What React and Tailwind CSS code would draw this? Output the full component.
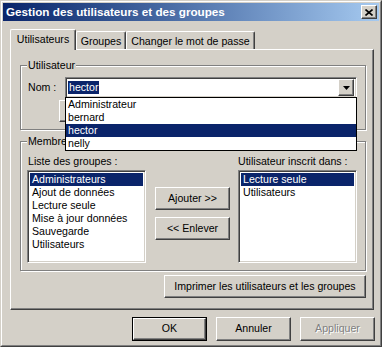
import React from "react";

const raised = "border border-t-white border-l-white border-r-[#404040] border-b-[#404040] shadow-[inset_-1px_-1px_0_#808080] bg-[#d4d0c8]";
const sunken = "border border-t-[#808080] border-l-[#808080] border-r-white border-b-white shadow-[inset_1px_1px_0_#404040,inset_-1px_-1px_0_#d4d0c8] bg-white";

const Button = ({ children, className = "", disabled, isDefault }) => {
  const label = (
    <span className={disabled ? "text-[#808080] [text-shadow:1px_1px_0_#fff]" : "text-black"}>{children}</span>
  );
  if (isDefault) {
    return (
      <div className={`border border-black flex ${className}`}>
        <div className={`${raised} flex-1 flex items-center justify-center`}>{label}</div>
      </div>
    );
  }
  return <div className={`${raised} flex items-center justify-center ${className}`}>{label}</div>;
};

const GroupBox = ({ label, className = "", children }) => (
  <div className={`relative border border-[#808080] shadow-[inset_1px_1px_0_#fff,1px_1px_0_#fff] ${className}`}>
    <span className="absolute -top-[7px] left-[6px] px-[1px] bg-[#d4d0c8] leading-[13px]">{label}</span>
    {children}
  </div>
);

const ListBox = ({ items, selected }) => (
  <div className={`${sunken} w-[119px] h-[93px] p-[2px]`}>
    {items.map((item) => (
      <div
        key={item}
        className={`h-[13px] leading-[13px] pl-[2px] whitespace-nowrap ${item === selected ? "bg-[#0a246a] text-white" : ""}`}
      >
        {item}
      </div>
    ))}
  </div>
);

const Tab = ({ children, active, className = "" }) => (
  <div
    className={`border-t border-l border-t-white border-l-white border-r border-r-[#404040] shadow-[inset_-1px_0_0_#808080] rounded-t-[2px] bg-[#d4d0c8] flex justify-center pt-[3px] leading-[13px] whitespace-nowrap ${
      active ? "h-[21px] -mb-[1px] relative z-10" : "h-[18px]"
    } ${className}`}
  >
    {children}
  </div>
);

const users = ["Administrateur", "bernard", "hector", "nelly"];
const groups = ["Administrateurs", "Ajout de données", "Lecture seule", "Mise à jour données", "Sauvegarde", "Utilisateurs"];
const memberOf = ["Lecture seule", "Utilisateurs"];

export default function App() {
  return (
    <div className="w-[382px] h-[347px] bg-[#d4d0c8] border border-t-[#d4d0c8] border-l-[#d4d0c8] border-r-[#404040] border-b-[#404040] font-['Liberation_Sans',Arial,sans-serif] text-[10.6px] text-black">
      <div className="h-full border border-t-white border-l-white border-r-[#808080] border-b-[#808080] p-[1px] flex flex-col">
        {/* title bar */}
        <div className="h-[18px] shrink-0 flex items-center bg-gradient-to-r from-[#0a246a] to-[#a6caf0] pl-[3px]">
          <span className="flex-1 text-white font-bold text-[11.7px] leading-[14px] whitespace-nowrap">
            Gestion des utilisateurs et des groupes
          </span>
          <div className={`${raised} w-[16px] h-[14px] mr-[2px] flex items-center justify-center`}>
            <svg width="8" height="7" viewBox="0 0 8 7">
              <path d="M0.5 0.5 L7.5 6.5 M7.5 0.5 L0.5 6.5" stroke="#000" strokeWidth="1.6" />
            </svg>
          </div>
        </div>

        {/* tabs */}
        <div className="h-[20px] mt-[8px] pl-[7px] flex items-end shrink-0">
          <Tab active className="w-[66px]">Utilisateurs</Tab>
          <Tab className="w-[50px]">Groupes</Tab>
          <Tab className="w-[129px]">Changer le mot de passe</Tab>
        </div>

        {/* tab panel */}
        <div className="ml-[7px] w-[364px] h-[261px] shrink-0 border border-t-white border-l-white border-r-[#404040] border-b-[#404040] shadow-[inset_-1px_-1px_0_#808080] flex flex-col">
          <GroupBox label="Utilisateur" className="ml-[9px] mt-[15px] w-[346px] h-[65px]">
            <div className="pt-[11px] pl-[7px] flex items-center">
              <span className="w-[37px] leading-[13px]">Nom :</span>
              <div className="relative">
                <div className={`${sunken} w-[292px] h-[21px] flex items-center p-[2px]`}>
                  <div className="flex-1 flex items-center">
                    <span className="bg-[#0a246a] text-white leading-[13px] px-[1px]">hector</span>
                  </div>
                  <div className={`${raised} w-[16px] h-[17px] flex items-center justify-center`}>
                    <svg width="7" height="4" viewBox="0 0 7 4">
                      <polygon points="0,0 7,0 3.5,4" fill="#000" />
                    </svg>
                  </div>
                </div>
                {/* open dropdown list */}
                <div className="absolute top-[20px] left-0 z-20 w-[292px] border border-black bg-white">
                  {users.map((u) => (
                    <div
                      key={u}
                      className={`h-[13px] leading-[13px] pl-[2px] ${u === "hector" ? "bg-[#0a246a] text-white" : ""}`}
                    >
                      {u}
                    </div>
                  ))}
                </div>
              </div>
            </div>
            <div className={`${raised} mt-[2px] ml-[38px] w-[100px] h-[22px]`} />
          </GroupBox>

          <GroupBox label="Membres" className="ml-[9px] mt-[11px] w-[346px] h-[130px]">
            <div className="pt-[13px] pl-[6px] flex">
              <div className="flex flex-col">
                <span className="h-[13px] leading-[13px] pl-[1px] mb-[2px] whitespace-nowrap">Liste des groupes :</span>
                <ListBox items={groups} selected="Administrateurs" />
              </div>
              <div className="ml-[9px] pt-[32px] flex flex-col gap-[7px]">
                <Button className="w-[75px] h-[23px]">Ajouter &gt;&gt;</Button>
                <Button className="w-[75px] h-[23px]">&lt;&lt; Enlever</Button>
              </div>
              <div className="ml-[8px] flex flex-col">
                <span className="h-[13px] leading-[13px] mb-[2px] whitespace-nowrap">Utilisateur inscrit dans :</span>
                <ListBox items={memberOf} selected="Lecture seule" />
              </div>
            </div>
          </GroupBox>

          <Button className="ml-[153px] mt-[4px] w-[202px] h-[23px]">Imprimer les utilisateurs et les groupes</Button>
        </div>

        {/* dialog buttons */}
        <div className="mt-[7px] pr-[4px] flex justify-end gap-[9px]">
          <Button isDefault className="w-[75px] h-[24px]">OK</Button>
          <Button className="w-[75px] h-[24px]">Annuler</Button>
          <Button disabled className="w-[75px] h-[24px]">Appliquer</Button>
        </div>
      </div>
    </div>
  );
}
